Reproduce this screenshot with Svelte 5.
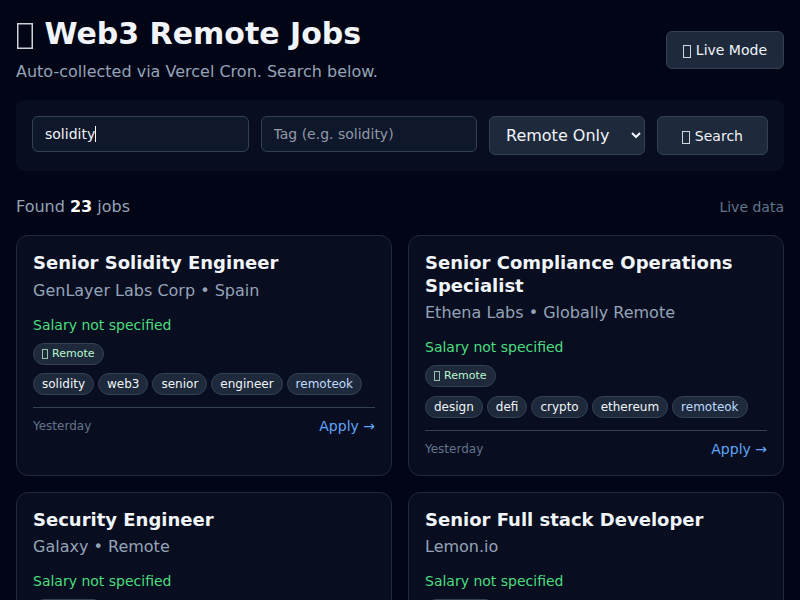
<script>
  const jobs = [
    { title: 'Senior Solidity Engineer', company: 'GenLayer Labs Corp • Spain', tags: ['solidity', 'web3', 'senior', 'engineer'] },
    { title: 'Senior Compliance Operations Specialist', company: 'Ethena Labs • Globally Remote', tags: ['design', 'defi', 'crypto', 'ethereum'] },
    { title: 'Security Engineer', company: 'Galaxy • Remote', tags: [] },
    { title: 'Senior Full stack Developer', company: 'Lemon.io', tags: [] }
  ];
  let query = $state('solidity');
  let tag = $state('');
</script>

<main>
  <header>
    <div>
      <h1><i class="glyph large"></i> Web3 Remote Jobs</h1>
      <p class="sub">Auto-collected via Vercel Cron. Search below.</p>
    </div>
    <button class="btn live"><i class="glyph"></i> Live Mode</button>
  </header>

  <form class="panel" onsubmit={(e) => e.preventDefault()}>
    <div class="field">
      <span class="typed">{query}</span><span class="caret"></span>
    </div>
    <input class="field" placeholder="Tag (e.g. solidity)" bind:value={tag} />
    <select>
      <option>Remote Only</option>
    </select>
    <button class="btn search"><i class="glyph"></i> Search</button>
  </form>

  <div class="summary">
    <span>Found <b>23</b> jobs</span>
    <span class="source">Live data</span>
  </div>

  <section class="grid">
    {#each jobs as job}
      <article>
        <h2>{job.title}</h2>
        <p class="company">{job.company}</p>
        <p class="salary">Salary not specified</p>
        {#if job.tags.length}
          <div class="pill remote"><i class="glyph small"></i> Remote</div>
          <div class="tags">
            {#each job.tags as name}<span class="pill">{name}</span>{/each}
            <span class="pill origin">remoteok</span>
          </div>
          <footer>
            <span class="date">Yesterday</span>
            <a href="#apply">Apply →</a>
          </footer>
        {:else}
          <div class="pill remote blank"></div>
        {/if}
      </article>
    {/each}
  </section>
</main>

<style>
  :global(body) {
    margin: 0;
    background: #020515;
    overflow: hidden;
  }
  main {
    box-sizing: border-box;
    height: 600px;
    overflow: hidden;
    padding: 16px;
    background: #020515;
    color: #f1f5f9;
    font: 16px/24px 'DejaVu Sans', sans-serif;
  }
  main * { box-sizing: border-box; }
  h1, h2, p { margin: 0; }
  header {
    display: flex;
    justify-content: space-between;
    align-items: center;
  }
  h1 { font-size: 30px; line-height: 36px; }
  .sub { margin-top: 8px; color: #94a3b8; }
  .glyph {
    display: inline-block;
    width: 8px;
    height: 13px;
    margin-right: .4px;
    border: 1px solid currentColor;
    vertical-align: -3px;
    opacity: .85;
  }
  .glyph.large {
    width: 16px;
    height: 26px;
    margin: 0 1px;
    border-width: 1px;
    box-shadow: inset 0 0 0 .5px currentColor;
    vertical-align: -5px;
  }
  .glyph.small {
    width: 6px;
    height: 10px;
    margin-right: .6px;
    vertical-align: -2px;
    opacity: .75;
  }
  .btn {
    border: 1px solid #334155;
    border-radius: 6px;
    background: #1e293b;
    color: #f1f5f9;
    font: 14px 'DejaVu Sans', sans-serif;
    padding: 0;
    white-space: nowrap;
  }
  .live { width: 118px; height: 38px; }
  .panel {
    display: flex;
    align-items: flex-start;
    gap: 12px;
    height: 71px;
    margin-top: 16px;
    padding: 16px;
    border-radius: 8px;
    background: #080d1f;
  }
  .field {
    flex: 1 1 0;
    min-width: 0;
    height: 36px;
    padding: 0 12px;
    border: 1px solid #334155;
    border-radius: 6px;
    background: #0f172a;
    color: #f1f5f9;
    font: 14px 'DejaVu Sans', sans-serif;
    display: flex;
    align-items: center;
    outline: none;
  }
  input.field::placeholder { color: #9299a6; opacity: 1; }
  .caret { width: 1px; height: 16px; background: #fff; }
  select {
    width: 156px;
    height: 39px;
    padding: 0 0 0 12px;
    border: 1px solid #334155;
    border-radius: 6px;
    background: #1e293b;
    color: #f1f5f9;
    font: 16px 'DejaVu Sans', sans-serif;
  }
  .search { width: 111px; height: 39px; }
  .summary {
    display: flex;
    justify-content: space-between;
    align-items: center;
    margin: 24px 0 16px;
    color: #94a3b8;
  }
  b { color: #fff; }
  .source { color: #64748b; font-size: 14px; line-height: 20px; }
  .grid {
    display: grid;
    grid-template-columns: 1fr 1fr;
    gap: 16px;
  }
  article {
    min-height: 240px;
    border: 1px solid #1e293b;
    border-radius: 12px;
    background: #080d1f;
    padding: 16px;
  }
  h2 { font-size: 18px; line-height: 22.5px; }
  .company { margin-top: 4px; color: #94a3b8; }
  .salary { margin-top: 12px; color: #4ade80; font-size: 14px; line-height: 20px; }
  .pill {
    height: 22px;
    padding: 2px 8px;
    border: 1px solid #334155;
    border-radius: 11px;
    background: #1e293b;
    color: #f1f5f9;
    font-size: 12px;
    line-height: 16px;
  }
  .remote {
    width: fit-content;
    margin-top: 8px;
    color: #bbf7d0;
    font-size: 11px;
  }
  .blank { width: 71px; }
  .tags { display: flex; gap: 4px; margin-top: 8.6px; }
  .origin { color: #bfdbfe; }
  footer {
    display: flex;
    justify-content: space-between;
    align-items: center;
    margin-top: 12px;
    padding-top: 8px;
    border-top: 1px solid #334155;
    font-size: 14px;
    line-height: 20px;
  }
  .date { color: #64748b; font-size: 12px; }
  a { color: #60a5fa; text-decoration: none; }
</style>
